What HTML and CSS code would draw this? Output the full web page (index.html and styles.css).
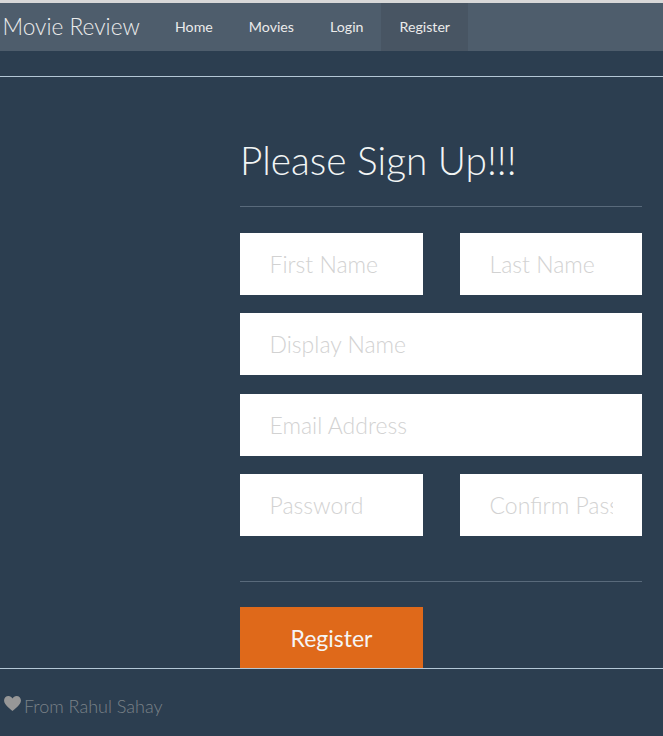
FILE: index.html
```html
<!DOCTYPE html>
<html lang="en">
<head>
    <meta charset="UTF-8">
    <meta name="viewport" content="width=device-width, initial-scale=1.0">
    <title>Movie Review</title>
    <link rel="stylesheet" href="styles.css">
</head>
<body>
    <!-- Top navigation -->
    <div class="navbar">
        <a class="brand" href="#">Movie Review</a>
        <a class="nav-link" href="#">Home</a>
        <a class="nav-link" href="#">Movies</a>
        <a class="nav-link" href="#">Login</a>
        <a class="nav-link active" href="#">Register</a>
    </div>
    <hr class="rule top-rule">

    <!-- Sign up form -->
    <div class="content">
        <form class="signup">
            <h1>Please Sign Up!!!</h1>
            <hr class="form-rule title-rule">
            <div class="row split">
                <input type="text" placeholder="First Name">
                <input type="text" placeholder="Last Name">
            </div>
            <div class="row">
                <input type="text" placeholder="Display Name">
            </div>
            <div class="row">
                <input type="email" placeholder="Email Address">
            </div>
            <div class="row split">
                <input type="password" placeholder="Password">
                <input type="password" placeholder="Confirm Password">
            </div>
            <hr class="form-rule actions-rule">
            <div class="split">
                <button type="button">Register</button>
            </div>
        </form>
    </div>

    <hr class="rule">
    <div class="footer">
        <svg class="heart" viewBox="0 0 18 16" aria-hidden="true">
            <path d="M9 16C7 14 0 9.500 0 4.700 0 2 2 0 4.700 0 6.500 0 8 1 9 2.600 10 1 11.500 0 13.300 0 16 0 18 2 18 4.700 18 9.500 11 14 9 16Z"/>
        </svg>
        <span>From Rahul Sahay</span>
    </div>
</body>
</html>
```

FILE: styles.css
```css
* {
    margin: 0;
    padding: 0;
    box-sizing: border-box;
    font-family: Lato, sans-serif;
}
html, body {
    height: 736px;
    overflow: hidden;
}
body {
    background: #2c3e50;
    border-top: 3px solid #d8d8d8;
}
.navbar {
    display: flex;
    height: 48px;
    background: #4e5d6c;
}
.brand {
    width: 157px;
    padding-left: 2.500px;
    font-size: 22.700px;
    font-weight: 300;
    line-height: 48px;
    color: #ebebeb;
    text-decoration: none;
    white-space: nowrap;
}
.nav-link {
    padding: 0 18px;
    font-size: 14.200px;
    line-height: 48px;
    color: #ebebeb;
    text-decoration: none;
}
.nav-link.active {
    background: #485563;
}
.rule {
    border: 0;
    height: 1px;
    background: #b4c7d6;
}
.top-rule {
    margin-top: 25px;
}
.content {
    height: 591px;
    padding: 60px 21px 0 240px;
}
h1 {
    font-size: 38.800px;
    font-weight: 300;
    line-height: 46px;
    color: #f2f5f5;
}
.form-rule {
    border: 0;
    height: 1px;
    background: #596a7b;
}
.title-rule {
    margin: 23px 0 26px;
}
.actions-rule {
    margin: 45px 0 25px;
}
.row {
    margin-bottom: 18.400px;
}
.split {
    display: grid;
    grid-template-columns: 183px 182px;
    justify-content: space-between;
}
.row:last-of-type {
    margin-bottom: 0;
}
input {
    display: block;
    width: 100%;
    height: 62px;
    padding: 0 29.500px;
    border: 0;
    background: #fff;
    font-size: 23px;
    font-weight: 300;
    color: #333;
}
input::placeholder {
    color: #d2d2d2;
    opacity: 1;
}
button {
    height: 61px;
    border: 0;
    background: #df691a;
    color: #f5f5f5;
    font-size: 23px;
    font-weight: 400;
}
.footer {
    display: flex;
    align-items: center;
    gap: 3px;
    height: 75px;
    padding: 0 0 2px 4px;
    font-size: 18px;
    font-weight: 300;
    color: #7a8288;
}
.heart {
    width: 17px;
    height: 15px;
    margin-bottom: 4px;
    fill: #979797;
}
```
